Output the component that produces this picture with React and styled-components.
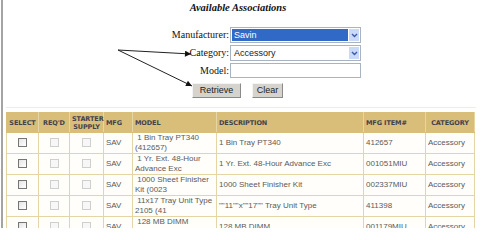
import React from 'react'
import styled, { createGlobalStyle } from 'styled-components'

const GlobalStyle = createGlobalStyle`
  html, body {
    margin: 0;
    padding: 0;
    background: #ffffff;
  }
`

const Frame = styled.div`
  position: relative;
  width: 499px;
  height: 228px;
  margin-left: 1px;
  border-left: 2px solid #a4a4a4;
  overflow: hidden;
  background: #ffffff;
`

const Title = styled.div`
  width: 470px;
  padding-top: 2px;
  height: 16px;
  text-align: center;
  font-family: "Liberation Serif", serif;
  font-weight: bold;
  font-style: italic;
  font-size: 10.5px;
  color: #111;
`

const Form = styled.div`
  display: grid;
  grid-template-columns: 227px 131px;
  grid-auto-rows: 16px;
  row-gap: 2px;
  margin-top: 9px;
`

const Label = styled.label`
  text-align: right;
  padding-right: 1px;
  font-family: "Liberation Serif", serif;
  font-size: 10px;
  line-height: 16px;
  color: #111;
`

const SelectBox = styled.div`
  display: flex;
  box-sizing: border-box;
  height: 16px;
  border: 1px solid #a9b4c2;
  background: #fff;
  padding: 1px;
`

const SelectValue = styled.div`
  flex: 1;
  margin-right: 1px;
  padding-left: 2px;
  font-family: "Liberation Sans", Arial, sans-serif;
  font-size: 9px;
  line-height: 12px;
  color: ${p => (p.$selected ? '#ffffff' : '#222')};
  background: ${p => (p.$selected ? '#3169c6' : 'transparent')};
`

const ArrowButton = styled.div`
  width: 10px;
  display: flex;
  align-items: center;
  justify-content: center;
  background: #c9d9f8;
`

const TextInput = styled.div`
  box-sizing: border-box;
  height: 15px;
  border: 1px solid #a9b4c2;
  background: #fff;
`

const Buttons = styled.div`
  display: flex;
  gap: 11px;
  padding-left: 189px;
  margin-top: 4px;
`

const Button = styled.div`
  box-sizing: border-box;
  width: ${p => p.$w}px;
  height: 15px;
  background: #d6d3cc;
  border: 1px solid;
  border-color: #f4f4f4 #8a8a8a #8a8a8a #f4f4f4;
  text-align: center;
  font-family: "Liberation Sans", Arial, sans-serif;
  font-size: 9px;
  line-height: 13px;
  color: #222;
`

const Rule = styled.div`
  margin: 9px 26px 0 3px;
  height: 1px;
  background: #f2eedf;
`

const Table = styled.table`
  margin: 4px 0 0 3px;
  width: 468px;
  table-layout: fixed;
  border-collapse: collapse;
  font-family: "Liberation Sans", Arial, sans-serif;
`

const Th = styled.th`
  height: 19px;
  padding: 0 2px;
  background: #d8be78;
  border: 1px solid #d8be78;
  border-right-color: #e6d6a4;
  text-align: ${p => p.$align || 'left'};
  font-family: "DejaVu Sans", Verdana, sans-serif;
  font-size: 6.5px;
  font-weight: bold;
  line-height: 8px;
  color: #44414e;
  letter-spacing: -0.1px;
`

const Td = styled.td`
  height: 20px;
  padding: 0 2px;
  border: 1px solid #e3d5a6;
  background: #fffefb;
  text-align: ${p => p.$align || 'left'};
  vertical-align: middle;
  font-size: 8px;
  line-height: 10px;
  color: #5a5a5a;
  white-space: nowrap;
  overflow: hidden;
`

const Check = styled.span`
  display: inline-block;
  width: 7px;
  height: 7px;
  border: 1px solid ${p => (p.$disabled ? '#cfcfcf' : '#767676')};
  background: ${p => (p.$disabled ? '#f7f7f7' : 'linear-gradient(135deg, #e4e4e4, #ffffff)')};
  vertical-align: middle;
`

const Overlay = styled.svg`
  position: absolute;
  left: 0;
  top: 0;
  pointer-events: none;
`

const Chevron = () => (
  <svg width="7" height="5" viewBox="0 0 7 5">
    <path d="M1 1 L3.5 3.5 L6 1" fill="none" stroke="#3a5ca8" strokeWidth="1.4" />
  </svg>
)

const rows = [
  { model: ['\u00a01 Bin Tray PT340', '(412657)'], desc: '1 Bin Tray PT340', item: '412657' },
  { model: ['\u00a01 Yr. Ext. 48-Hour', 'Advance Exc'], desc: '1 Yr. Ext. 48-Hour Advance Exc', item: '001051MIU' },
  { model: ['\u00a01000 Sheet Finisher', 'Kit (0023'], desc: '1000 Sheet Finisher Kit', item: '002337MIU' },
  { model: ['\u00a011x17 Tray Unit Type', '2105 (41'], desc: '""11""x""17"" Tray Unit Type', item: '411398' },
  { model: ['\u00a0128 MB DIMM', '(001179'], desc: '128 MB DIMM', item: '001179MIU' },
]

export default function App() {
  return (
    <>
      <GlobalStyle />
      <Frame>
        <Title>Available Associations</Title>
        <Form>
          <Label>Manufacturer:</Label>
          <SelectBox>
            <SelectValue $selected>Savin</SelectValue>
            <ArrowButton><Chevron /></ArrowButton>
          </SelectBox>
          <Label>Category:</Label>
          <SelectBox>
            <SelectValue>Accessory</SelectValue>
            <ArrowButton><Chevron /></ArrowButton>
          </SelectBox>
          <Label>Model:</Label>
          <TextInput />
        </Form>
        <Buttons>
          <Button $w={49}>Retrieve</Button>
          <Button $w={31}>Clear</Button>
        </Buttons>
        <Rule />
        <Table>
          <colgroup>
            <col style={{ width: 32 }} />
            <col style={{ width: 31 }} />
            <col style={{ width: 34 }} />
            <col style={{ width: 29 }} />
            <col style={{ width: 84 }} />
            <col style={{ width: 147 }} />
            <col style={{ width: 62 }} />
            <col style={{ width: 49 }} />
          </colgroup>
          <thead>
            <tr>
              <Th $align="center">SELECT</Th>
              <Th $align="center">REQ'D</Th>
              <Th $align="center">STARTER<br />SUPPLY</Th>
              <Th>MFG</Th>
              <Th>MODEL</Th>
              <Th>DESCRIPTION</Th>
              <Th>MFG ITEM#</Th>
              <Th $align="center">CATEGORY</Th>
            </tr>
          </thead>
          <tbody>
            {rows.map((r, i) => (
              <tr key={i}>
                <Td $align="center"><Check /></Td>
                <Td $align="center"><Check $disabled /></Td>
                <Td $align="center"><Check $disabled /></Td>
                <Td>SAV</Td>
                <Td>{r.model[0]}<br />{r.model[1]}</Td>
                <Td>{r.desc}</Td>
                <Td>{r.item}</Td>
                <Td>Accessory</Td>
              </tr>
            ))}
          </tbody>
        </Table>
        <Overlay width="499" height="228">
          <defs>
            <marker id="head" viewBox="0 0 10 10" refX="10" refY="5" markerWidth="8" markerHeight="6" orient="auto" markerUnits="userSpaceOnUse">
              <path d="M0 0 L10 5 L0 10 z" fill="#111" />
            </marker>
          </defs>
          <line x1="115" y1="50" x2="188" y2="54" stroke="#222" strokeWidth="1" markerEnd="url(#head)" />
          <line x1="115" y1="50" x2="189" y2="86" stroke="#222" strokeWidth="1" markerEnd="url(#head)" />
        </Overlay>
      </Frame>
    </>
  )
}
